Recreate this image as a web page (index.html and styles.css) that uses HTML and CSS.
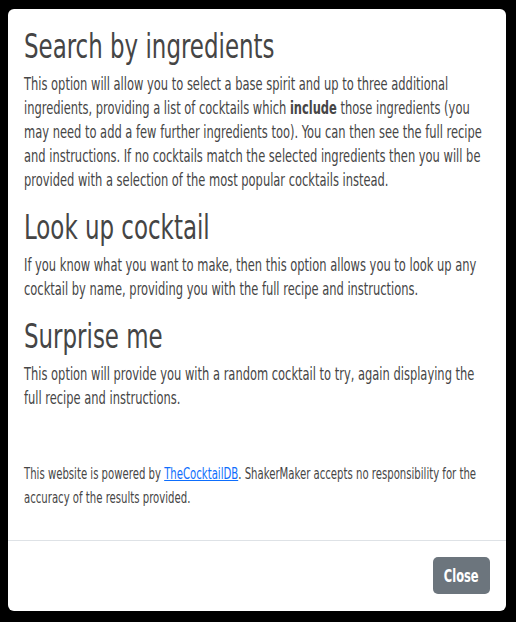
FILE: index.html
```html
<!DOCTYPE html>
<html lang="en">
<head>
<meta charset="utf-8">
<title>ShakerMaker help</title>
<link rel="stylesheet" href="styles.css">
</head>
<body>
<div class="modal">
  <div class="modal-body">
    <h2 class="title">Search by ingredients</h2>
    <p class="text">This option will allow you to select a base spirit and up to three additional<br>ingredients, providing a list of cocktails which <strong>include</strong> those ingredients (you<br>may need to add a few further ingredients too). You can then see the full recipe<br>and instructions. If no cocktails match the selected ingredients then you will be<br>provided with a selection of the most popular cocktails instead.</p>
    <h2 class="title">Look up cocktail</h2>
    <p class="text">If you know what you want to make, then this option allows you to look up any<br>cocktail by name, providing you with the full recipe and instructions.</p>
    <h2 class="title">Surprise me</h2>
    <p class="text">This option will provide you with a random cocktail to try, again displaying the<br>full recipe and instructions.</p>
    <p class="note">This website is powered by <a href="#">TheCocktailDB</a>. ShakerMaker accepts no responsibility for the<br>accuracy of the results provided.</p>
  </div>
  <div class="modal-footer">
    <button class="btn" type="button"><span class="btn-label">Close</span></button>
  </div>
</div>
</body>
</html>
```
FILE: styles.css
```css
* { box-sizing: border-box; }
html, body { margin: 0; height: 100%; }
body {
  background: #000;
  padding: 9px 10px 11px 8px;
  font-family: "DejaVu Sans Condensed", "DejaVu Sans", sans-serif;
  font-stretch: condensed;
  color: #464646;
}
.modal {
  background: #fff;
  border-radius: 6px;
  height: 602px;
  display: flex;
  flex-direction: column;
  overflow: hidden;
}
.modal-body {
  padding: 16px;
  flex: 1;
}
.title {
  margin: 0 0 8px;
  padding-top: 5px;
  font-size: 34px;
  line-height: 33px;
  font-weight: 400;
  color: #454545;
  white-space: nowrap;
  transform: scaleX(0.75);
  transform-origin: left top;
}
.text {
  margin: 0 0 14px;
  padding-top: 1px;
  font-size: 17px;
  line-height: 24px;
  white-space: nowrap;
  transform: scaleX(0.75);
  transform-origin: left top;
}
.text strong { font-weight: 700; }
.note {
  margin: 51px 0 14px;
  padding-top: 1px;
  font-size: 15px;
  line-height: 24px;
  white-space: nowrap;
  transform: scaleX(0.75);
  transform-origin: left top;
}
.note a { color: #0d6efd; text-decoration: underline; }
.modal-footer {
  border-top: 1px solid #dee2e6;
  padding: 16px 16px 17px;
  display: flex;
  justify-content: flex-end;
}
.btn {
  background: #6c757d;
  color: #fff;
  border: 0;
  border-radius: 5px;
  width: 57px;
  height: 37px;
  font-family: inherit;
  font-size: 17px;
  font-weight: 700;
  padding: 0;
  display: flex;
  align-items: center;
  justify-content: center;
}
.btn-label {
  display: inline-block;
  transform: scaleX(0.75);
}
```
